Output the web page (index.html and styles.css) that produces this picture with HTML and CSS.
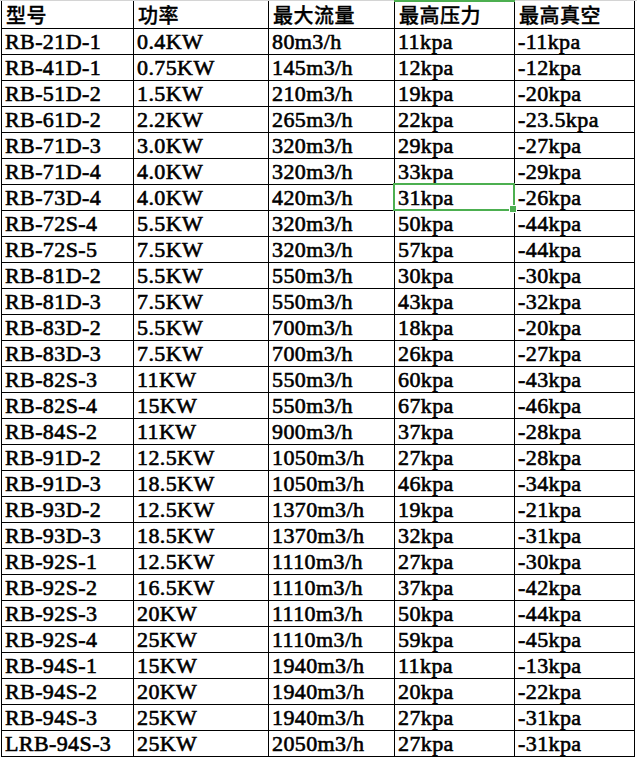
FILE: index.html
```html
<!DOCTYPE html>
<html lang="zh-CN">
<head>
<meta charset="utf-8">
<title>型号参数表</title>
<link rel="stylesheet" href="styles.css">
</head>
<body>
<div class="topbar"><span class="topbar-sel"></span></div>
<div class="wrap">
<div class="sheet">
  <div class="cell head">型号</div><div class="cell head">功率</div><div class="cell head">最大流量</div><div class="cell head">最高压力</div><div class="cell head">最高真空</div>
  <div class="cell">RB-21D-1</div><div class="cell">0.4KW</div><div class="cell">80m3/h</div><div class="cell">11kpa</div><div class="cell">-11kpa</div>
  <div class="cell">RB-41D-1</div><div class="cell">0.75KW</div><div class="cell">145m3/h</div><div class="cell">12kpa</div><div class="cell">-12kpa</div>
  <div class="cell">RB-51D-2</div><div class="cell">1.5KW</div><div class="cell">210m3/h</div><div class="cell">19kpa</div><div class="cell">-20kpa</div>
  <div class="cell">RB-61D-2</div><div class="cell">2.2KW</div><div class="cell">265m3/h</div><div class="cell">22kpa</div><div class="cell">-23.5kpa</div>
  <div class="cell">RB-71D-3</div><div class="cell">3.0KW</div><div class="cell">320m3/h</div><div class="cell">29kpa</div><div class="cell">-27kpa</div>
  <div class="cell">RB-71D-4</div><div class="cell">4.0KW</div><div class="cell">320m3/h</div><div class="cell">33kpa</div><div class="cell">-29kpa</div>
  <div class="cell">RB-73D-4</div><div class="cell">4.0KW</div><div class="cell">420m3/h</div><div class="cell selected">31kpa</div><div class="cell">-26kpa</div>
  <div class="cell">RB-72S-4</div><div class="cell">5.5KW</div><div class="cell">320m3/h</div><div class="cell">50kpa</div><div class="cell">-44kpa</div>
  <div class="cell">RB-72S-5</div><div class="cell">7.5KW</div><div class="cell">320m3/h</div><div class="cell">57kpa</div><div class="cell">-44kpa</div>
  <div class="cell">RB-81D-2</div><div class="cell">5.5KW</div><div class="cell">550m3/h</div><div class="cell">30kpa</div><div class="cell">-30kpa</div>
  <div class="cell">RB-81D-3</div><div class="cell">7.5KW</div><div class="cell">550m3/h</div><div class="cell">43kpa</div><div class="cell">-32kpa</div>
  <div class="cell">RB-83D-2</div><div class="cell">5.5KW</div><div class="cell">700m3/h</div><div class="cell">18kpa</div><div class="cell">-20kpa</div>
  <div class="cell">RB-83D-3</div><div class="cell">7.5KW</div><div class="cell">700m3/h</div><div class="cell">26kpa</div><div class="cell">-27kpa</div>
  <div class="cell">RB-82S-3</div><div class="cell">11KW</div><div class="cell">550m3/h</div><div class="cell">60kpa</div><div class="cell">-43kpa</div>
  <div class="cell">RB-82S-4</div><div class="cell">15KW</div><div class="cell">550m3/h</div><div class="cell">67kpa</div><div class="cell">-46kpa</div>
  <div class="cell">RB-84S-2</div><div class="cell">11KW</div><div class="cell">900m3/h</div><div class="cell">37kpa</div><div class="cell">-28kpa</div>
  <div class="cell">RB-91D-2</div><div class="cell">12.5KW</div><div class="cell">1050m3/h</div><div class="cell">27kpa</div><div class="cell">-28kpa</div>
  <div class="cell">RB-91D-3</div><div class="cell">18.5KW</div><div class="cell">1050m3/h</div><div class="cell">46kpa</div><div class="cell">-34kpa</div>
  <div class="cell">RB-93D-2</div><div class="cell">12.5KW</div><div class="cell">1370m3/h</div><div class="cell">19kpa</div><div class="cell">-21kpa</div>
  <div class="cell">RB-93D-3</div><div class="cell">18.5KW</div><div class="cell">1370m3/h</div><div class="cell">32kpa</div><div class="cell">-31kpa</div>
  <div class="cell">RB-92S-1</div><div class="cell">12.5KW</div><div class="cell">1110m3/h</div><div class="cell">27kpa</div><div class="cell">-30kpa</div>
  <div class="cell">RB-92S-2</div><div class="cell">16.5KW</div><div class="cell">1110m3/h</div><div class="cell">37kpa</div><div class="cell">-42kpa</div>
  <div class="cell">RB-92S-3</div><div class="cell">20KW</div><div class="cell">1110m3/h</div><div class="cell">50kpa</div><div class="cell">-44kpa</div>
  <div class="cell">RB-92S-4</div><div class="cell">25KW</div><div class="cell">1110m3/h</div><div class="cell">59kpa</div><div class="cell">-45kpa</div>
  <div class="cell">RB-94S-1</div><div class="cell">15KW</div><div class="cell">1940m3/h</div><div class="cell">11kpa</div><div class="cell">-13kpa</div>
  <div class="cell">RB-94S-2</div><div class="cell">20KW</div><div class="cell">1940m3/h</div><div class="cell">20kpa</div><div class="cell">-22kpa</div>
  <div class="cell">RB-94S-3</div><div class="cell">25KW</div><div class="cell">1940m3/h</div><div class="cell">27kpa</div><div class="cell">-31kpa</div>
  <div class="cell">LRB-94S-3</div><div class="cell">25KW</div><div class="cell">2050m3/h</div><div class="cell">27kpa</div><div class="cell">-31kpa</div>
</div>
</div>
</body>
</html>
```
FILE: styles.css
```css
* { box-sizing: border-box; }
html, body { margin: 0; padding: 0; background: #fff; }
body { width: 637px; height: 757px; overflow: hidden; }

.topbar {
  height: 1px;
  background: #d4d4d4;
  position: relative;
}
.topbar-sel {
  position: absolute;
  left: 394px;
  top: 0;
  width: 121px;
  height: 2px;
  background: #4caf50;
}

.wrap { padding-left: 1px; }

.sheet {
  display: grid;
  grid-template-columns: 131px 134px 125px 119px 119px;
  grid-template-rows: 27px repeat(28, 25px);
  gap: 1px;
  padding: 0 1px 1px 1px;
  background: #000;
  width: max-content;
}

.cell {
  background: #fff;
  color: #000;
  font-family: "Liberation Serif", "Noto Sans CJK SC", serif;
  font-weight: normal;
  font-size: 22px;
  line-height: 25px;
  letter-spacing: 0.4px;
  -webkit-text-stroke: 0.6px #000;
  padding-left: 3px;
  white-space: nowrap;
  overflow: hidden;
}

.head {
  font-family: "Noto Sans CJK SC", sans-serif;
  font-weight: 500;
  font-size: 20px;
  line-height: 27px;
  letter-spacing: 0.5px;
  -webkit-text-stroke: 0.3px #000;
  padding-left: 4px;
}

.selected { position: relative; overflow: visible; }
.selected::after {
  content: "";
  position: absolute;
  left: -2px;
  top: -2px;
  right: -1px;
  bottom: -1px;
  border: 2px solid #4caf50;
  pointer-events: none;
}
.selected::before {
  content: "";
  position: absolute;
  right: -3px;
  bottom: -3px;
  width: 6px;
  height: 6px;
  background: #4caf50;
  border: 1px solid #fff;
  z-index: 1;
}
```
